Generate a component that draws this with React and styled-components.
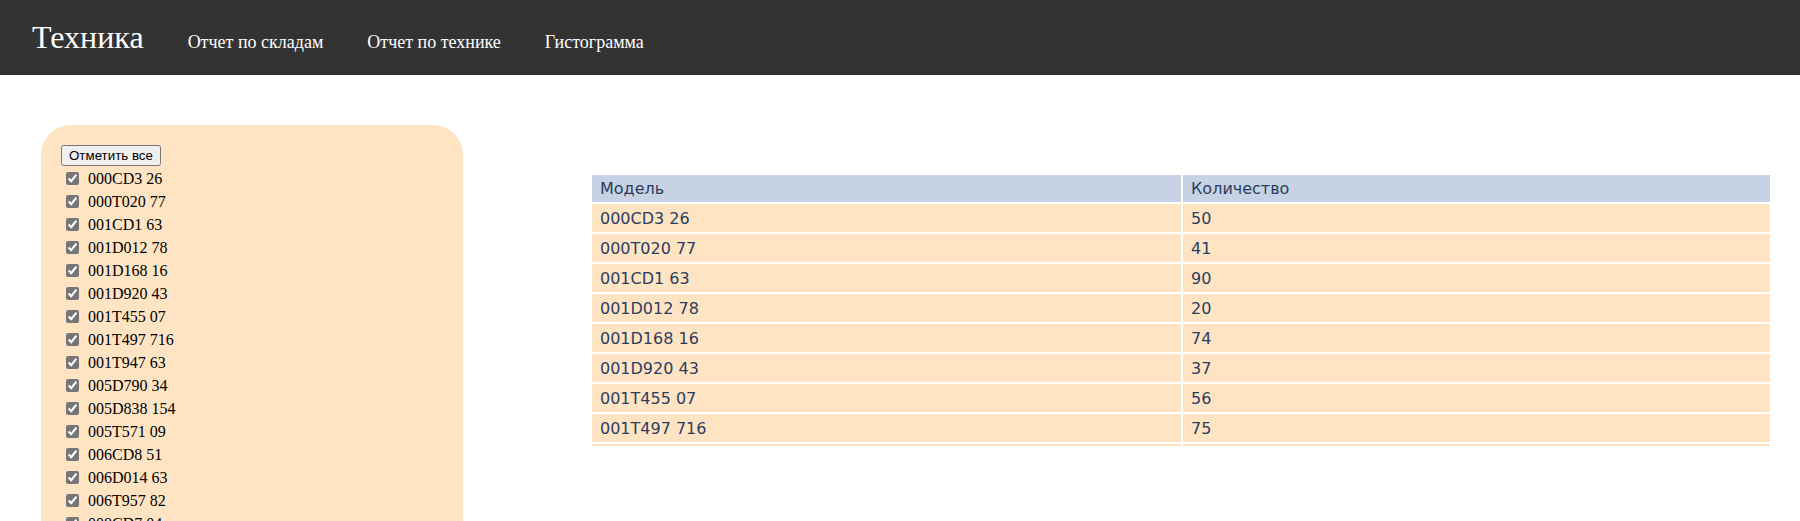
import React, { useState } from "react";
import styled, { createGlobalStyle } from "styled-components";

const GlobalStyle = createGlobalStyle`
  html, body {
    margin: 0;
    padding: 0;
    overflow: hidden;
    background: #ffffff;
    font-family: "Liberation Serif", "Times New Roman", serif;
  }
`;

const Navbar = styled.nav`
  display: flex;
  align-items: center;
  height: 75px;
  padding: 0 0 0 32px;
  background-color: #333333;
  color: #ffffff;
`;

const Brand = styled.a`
  font-size: 32px;
  color: #ffffff;
  text-decoration: none;
  margin-right: 44px;
  margin-top: 0;
`;

const NavLink = styled.a`
  font-size: 18px;
  color: #ffffff;
  text-decoration: none;
  margin-right: 44px;
  margin-top: 10px;
`;

const Main = styled.div`
  display: flex;
  align-items: flex-start;
  padding: 50px 30px 0 41px;
`;

const Panel = styled.div`
  width: 382px;
  flex-shrink: 0;
  padding: 20px;
  border-radius: 30px;
  background-color: bisque;
`;

const SelectAll = styled.button`
  font-family: "Liberation Sans", Arial, sans-serif;
  font-size: 13.33px;
  padding: 1px 6px;
  margin-bottom: 1px;
`;

const CheckRow = styled.label`
  display: flex;
  align-items: center;
  height: 23px;
  font-size: 16px;
  color: #000000;
`;

const Check = styled.input`
  margin: 0 9px 0 5px;
  width: 13px;
  height: 13px;
  accent-color: #767676;
`;

const TableWrap = styled.div`
  flex: 1;
  margin-left: 129px;
  margin-top: 50px;
`;

const Table = styled.table`
  width: 100%;
  border-collapse: separate;
  border-spacing: 0;
  table-layout: fixed;
  font-family: "DejaVu Sans", Verdana, sans-serif;
  font-size: 16px;
  color: #2b3d5f;
`;

const HeadCell = styled.th`
  text-align: left;
  font-weight: normal;
  height: 27px;
  padding: 0 8px;
  background-color: #c7d3e4;
  border-bottom: 2px solid #ffffff;
  border-left: ${(p) => (p.$divider ? "2px solid #ffffff" : "none")};
`;

const Cell = styled.td`
  height: 28px;
  padding: 0 8px;
  background-color: bisque;
  border-bottom: 2px solid #ffffff;
  border-left: ${(p) => (p.$divider ? "2px solid #ffffff" : "none")};
`;

const FootCell = styled.td`
  height: 2px;
  padding: 0;
  background-color: bisque;
  border-left: ${(p) => (p.$divider ? "2px solid #ffffff" : "none")};
`;

const models = [
  "000CD3 26", "000T020 77", "001CD1 63", "001D012 78", "001D168 16",
  "001D920 43", "001T455 07", "001T497 716", "001T947 63", "005D790 34",
  "005D838 154", "005T571 09", "006CD8 51", "006D014 63", "006T957 82",
  "008CD7 04", "008D015 31", "008T120 44",
];

const stock = [
  ["000CD3 26", 50], ["000T020 77", 41], ["001CD1 63", 90], ["001D012 78", 20],
  ["001D168 16", 74], ["001D920 43", 37], ["001T455 07", 56], ["001T497 716", 75],
];

const App = () => {
  const [checked, setChecked] = useState(models.map(() => true));

  return (
    <>
      <GlobalStyle />
      <Navbar>
        <Brand href="#">Техника</Brand>
        <NavLink href="#">Отчет по складам</NavLink>
        <NavLink href="#">Отчет по технике</NavLink>
        <NavLink href="#">Гистограмма</NavLink>
      </Navbar>
      <Main>
        <Panel>
          <SelectAll onClick={() => setChecked(models.map(() => true))}>Отметить все</SelectAll>
          {models.map((m, i) => (
            <CheckRow key={m}>
              <Check
                type="checkbox"
                checked={checked[i]}
                onChange={() => setChecked(checked.map((c, j) => (j === i ? !c : c)))}
              />
              {m}
            </CheckRow>
          ))}
        </Panel>
        <TableWrap>
          <Table>
            <thead>
              <tr>
                <HeadCell>Модель</HeadCell>
                <HeadCell $divider>Количество</HeadCell>
              </tr>
            </thead>
            <tbody>
              {stock.map(([name, qty]) => (
                <tr key={name}>
                  <Cell>{name}</Cell>
                  <Cell $divider>{qty}</Cell>
                </tr>
              ))}
            </tbody>
            <tfoot>
              <tr>
                <FootCell />
                <FootCell $divider />
              </tr>
            </tfoot>
          </Table>
        </TableWrap>
      </Main>
    </>
  );
};

export default App;
